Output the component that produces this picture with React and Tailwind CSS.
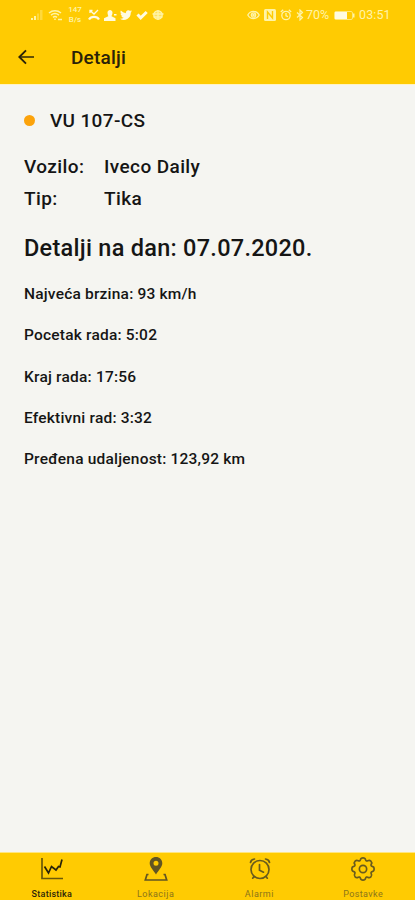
import React from "react";

const details = [
  "Najveća brzina: 93 km/h",
  "Pocetak rada: 5:02",
  "Kraj rada: 17:56",
  "Efektivni rad: 3:32",
  "Pređena udaljenost: 123,92 km",
];

function StatusBar() {
  return (
    <div className="flex h-[30px] items-center pl-[30px] pr-[23px] text-[#fff4a8]">
      <svg className="h-3 w-[14px] shrink-0" viewBox="0 0 14 12" fill="currentColor">
        <path d="M1 11V9h2v2zM4 11V7h2v4z" />
        <path d="M7 11V4.500h2V11zM10 11V1h2.500v10z" opacity="0.35" />
      </svg>
      <svg className="ml-[4px] h-[13px] w-[15px] shrink-0" viewBox="0 0 15 13" fill="none" stroke="currentColor" strokeWidth="1.500">
        <path d="M1 4C4.500 1 9.500 1 13 4M3 6.200c2.500-2 5.500-2 8 0M5 8.300c1.300-1 2.700-1 4 0" />
        <path d="M7 11v-1.500M10 10.500h4" />
      </svg>
      <div className="ml-[4px] flex w-[16px] flex-col items-center text-[8px] font-medium leading-[10px]">
        <span>147</span>
        <span>B/s</span>
      </div>
      <svg className="ml-[5px] h-3 w-3 shrink-0" viewBox="0 0 12 12" fill="none" stroke="#fffbe0" strokeWidth="1.300">
        <path d="M2 1.500 6 5l4-4M2 4V1.500h2.500" />
        <path d="M1 10.500C3 7 9 7 11 10.500" strokeWidth="2.200" />
      </svg>
      <svg className="ml-[4px] h-3 w-[13px] shrink-0" viewBox="0 0 13 12" fill="#fffbe0">
        <path d="M3.500 3.500C3.500 0 8.500 0 8.500 3.500c0 2-.8 2.800-1 3.700l4 2V12H0V9.200l4.300-2C4.200 6.300 3.500 5.500 3.500 3.500zM10 5h2.500v1.500H10z" />
      </svg>
      <svg className="ml-[3px] h-3 w-3 shrink-0" viewBox="0 0 24 24" fill="#fffbe0">
        <path d="M24 4.600a10 10 0 0 1-2.800.8 5 5 0 0 0 2.100-2.700 10 10 0 0 1-3.100 1.200 5 5 0 0 0-8.400 4.500A14 14 0 0 1 1.700 3.200a5 5 0 0 0 1.500 6.500A5 5 0 0 1 1 9.100a5 5 0 0 0 4 4.900 5 5 0 0 1-2.300.1 5 5 0 0 0 4.600 3.400A10 10 0 0 1 0 19.500 14 14 0 0 0 21.500 7a10 10 0 0 0 2.500-2.400z" />
      </svg>
      <svg className="ml-[4px] h-3 w-3 shrink-0" viewBox="0 0 12 12" fill="none" stroke="#fffbe0" strokeWidth="3">
        <path d="m1.500 5.500 3.200 3.300L10.700 3" />
      </svg>
      <svg className="ml-[4px] h-3 w-3 shrink-0" viewBox="0 0 12 12" fill="none" stroke="currentColor" strokeWidth="1.300">
        <circle cx="6" cy="6" r="4.200" fill="currentColor" fillOpacity="0.55" />
        <path d="M.5 5h11M1.500 8h9M6 1v10" />
      </svg>

      <svg className="ml-auto h-3 w-[13px] shrink-0" viewBox="0 0 13 12" fill="none" stroke="currentColor" strokeWidth="1.300">
        <path d="M.8 6C3.500 1.200 9.500 1.200 12.200 6 9.500 10.800 3.500 10.800.8 6z" />
        <circle cx="6.500" cy="6" r="2.200" />
        <circle cx="6.500" cy="6" r=".7" fill="currentColor" />
      </svg>
      <svg className="ml-[4px] h-3 w-3 shrink-0" viewBox="0 0 12 12">
        <rect width="12" height="12" rx="1.500" fill="currentColor" />
        <path d="M3.500 10V3l5 6V2" fill="none" stroke="#ffcb02" strokeWidth="1.400" />
      </svg>
      <svg className="ml-[4px] h-3 w-3 shrink-0" viewBox="0 0 12 12" fill="none" stroke="currentColor" strokeWidth="1.300">
        <circle cx="6" cy="6.500" r="4.200" />
        <path d="M6 4v2.800l2 .8M.8 3 3.200.8M8.800.8 11.200 3" />
      </svg>
      <svg className="ml-[4px] h-3 w-2 shrink-0" viewBox="0 0 8 12" fill="none" stroke="currentColor" strokeWidth="1.200">
        <path d="m1 3.500 5.500 5L4 11V1l2.500 2.500L1 8.500" />
      </svg>
      <span className="ml-[2px] w-[25px] whitespace-nowrap text-[12.500px] leading-none">70%</span>
      <svg className="ml-[3px] h-[9px] w-[21px] shrink-0" viewBox="0 0 21 9">
        <rect x=".5" y=".5" width="18" height="8" rx="1.500" fill="none" stroke="currentColor" strokeOpacity="0.7" />
        <rect x="1" y="1" width="12" height="7" fill="#fffbe0" />
        <path d="M19 2.500h1.500v4H19z" fill="currentColor" />
      </svg>
      <span className="ml-[4px] w-[33px] whitespace-nowrap text-[12.500px] leading-none tracking-[0.1px]">03:51</span>
    </div>
  );
}

function ChartIcon() {
  return (
    <svg className="h-6 w-6" viewBox="0 0 24 24" fill="none">
      <path d="M2 1v20.500h21" stroke="#6b5908" strokeWidth="1.700" />
      <path d="m4.500 9.500 4 6.500 3-6.500 4.500 3.500 2.500-3.500 1.500.5L22 2.500" stroke="#29230a" strokeWidth="1.700" />
    </svg>
  );
}

function LocationIcon() {
  return (
    <svg className="h-6 w-6" viewBox="0 0 24 24" fill="none">
      <path fillRule="evenodd" clipRule="evenodd" d="M12 0c3.600 0 6.300 2.700 6.300 6.200C18.300 10 14.300 13.500 12 17.500 9.700 13.500 5.700 10 5.700 6.200 5.700 2.700 8.400 0 12 0zm0 3.700a2.500 2.500 0 1 0 0 5 2.500 2.500 0 0 0 0-5z" fill="#615523" />
      <path d="M4.500 17.500H3l-1.700 5.500h21.400L21 17.500h-1.500" stroke="#615523" strokeWidth="1.700" />
    </svg>
  );
}

function AlarmIcon() {
  return (
    <svg className="ml-px h-6 w-6" viewBox="0 0 24 24" fill="none" stroke="#685b1e" strokeWidth="1.700" strokeLinecap="round">
      <circle cx="12" cy="12.500" r="9" />
      <path d="M11.500 7.500v5.700l4 2M2.500 5.500c.3-2 1.600-3.200 4-3.500M21.500 5.500c-.3-2-1.600-3.200-4-3.500M6 19.500l-1.300 1.700M18 19.500l1.300 1.700" />
    </svg>
  );
}

function GearIcon() {
  return (
    <svg className="h-6 w-6" viewBox="0.500 0.500 23 23" fill="none" stroke="#685b1e" strokeWidth="1.600" strokeLinejoin="round">
      <path d="M9.500 3.200C10 .7 14 .7 14.500 3.200c.2 1 1.200 1.400 2 .9 2.200-1.400 4.800 1.200 3.400 3.400-.5.800-.1 1.800.9 2 2.500.5 2.500 4.500 0 5-1 .2-1.400 1.200-.9 2 1.400 2.200-1.200 4.800-3.400 3.400-.8-.5-1.800-.1-2 .9-.5 2.500-4.500 2.500-5 0-.2-1-1.200-1.400-2-.9-2.200 1.400-4.800-1.200-3.400-3.400.5-.8.100-1.800-.9-2-2.500-.5-2.500-4.500 0-5 1-.2 1.400-1.200.9-2-1.400-2.200 1.200-4.800 3.400-3.400.8.500 1.800.1 2-.9z" />
      <circle cx="12" cy="12" r="3.500" />
    </svg>
  );
}

const tabs = [
  { label: "Statistika", icon: ChartIcon, tone: "text-[#2d260a] font-medium tracking-[0.25px]" },
  { label: "Lokacija", icon: LocationIcon, tone: "text-[#8b741a] tracking-[0.5px]" },
  { label: "Alarmi", icon: AlarmIcon, tone: "text-[#8b741a] tracking-[0.5px]" },
  { label: "Postavke", icon: GearIcon, tone: "text-[#8b741a] tracking-[0.4px]" },
];

export default function App() {
  return (
    <div className="flex h-[900px] w-full flex-col overflow-hidden bg-[#f5f5f1] font-['Roboto',sans-serif] text-[#151515]">
      <header className="h-[84px] shrink-0 bg-[#ffcb02]">
        <StatusBar />
        <div className="flex h-[54px] items-center pl-[18px]">
          <svg className="h-4 w-4 shrink-0" viewBox="0 0 16 16" fill="none" strokeWidth="1.900">
            <path d="M16 8H2" stroke="#5c4a05" />
            <path d="M8 1.300 1.300 8 8 14.700" stroke="#2a2208" />
          </svg>
          <h1 className="ml-[37px] text-[19px] font-medium leading-none tracking-[0.2px] text-[#2a2208]">Detalji</h1>
        </div>
      </header>

      <main className="flex-1 border-t border-[#fff3c4] pl-6 pt-[19px] font-medium">
        <div className="flex h-8 items-center">
          <span className="h-[11px] w-[11px] rounded-full bg-[#fca30b]" />
          <span className="ml-[15px] pt-px text-[19px] leading-none tracking-[0.35px]">VU 107-CS</span>
        </div>
        <dl className="mt-[15px] grid grid-cols-[80px_1fr] text-[19px] leading-8 tracking-[0.4px]">
          <dt>Vozilo:</dt>
          <dd>Iveco Daily</dd>
          <dt>Tip:</dt>
          <dd>Tika</dd>
        </dl>
        <h2 className="mt-[17px] whitespace-nowrap text-[23.500px] font-medium leading-8 tracking-[0.27px]">Detalji na dan: 07.07.2020.</h2>
        <ul className="mt-[10px] text-[15.500px] tracking-[0.2px]">
          {details.map((text) => (
            <li key={text} className="flex h-[41.250px] items-center whitespace-nowrap">
              {text}
            </li>
          ))}
        </ul>
      </main>

      <nav className="grid h-[48px] shrink-0 grid-cols-4 border-t border-[#ffe680] bg-[#ffcb02]">
        {tabs.map(({ label, icon: Icon, tone }) => (
          <div key={label} className="flex flex-col items-center pt-[4px]">
            <Icon />
            <span className={`mt-[8px] text-[9px] leading-[10px] ${tone}`}>{label}</span>
          </div>
        ))}
      </nav>
    </div>
  );
}
